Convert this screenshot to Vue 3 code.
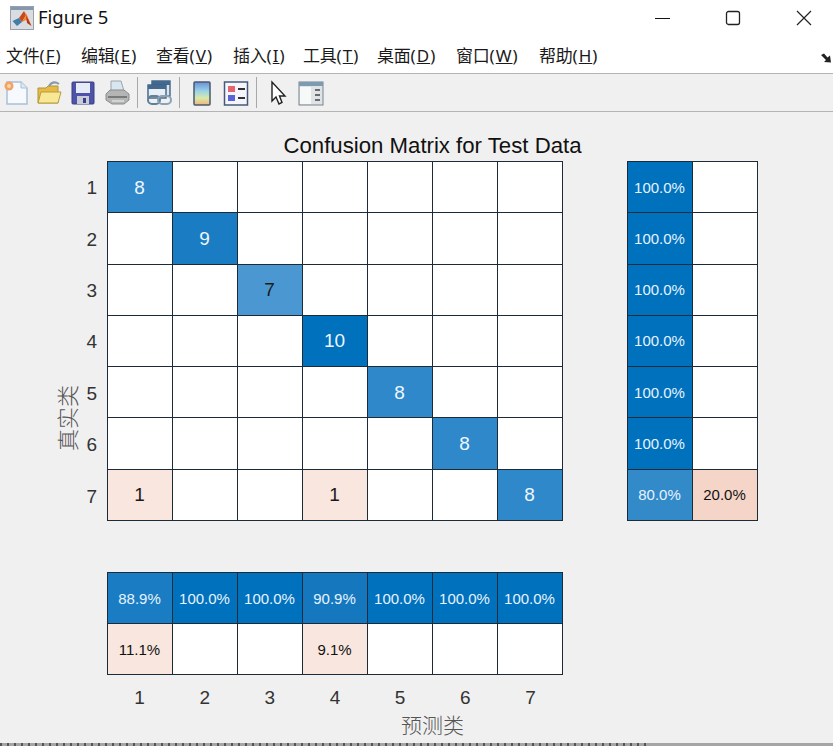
<template>
  <div class="window">
    <header class="titlebar">
      <svg class="app-icon" width="24" height="24" viewBox="0 0 24 24">
        <rect x="0.500" y="0.500" width="23" height="23" fill="#d9dde2" stroke="#98a1ab" />
        <rect x="1" y="1" width="22" height="3" fill="#8397ae" />
        <path d="M2.500 15 L9 12 L12 16 L7 20 Z" fill="#3f7ea8" />
        <path d="M9 12 L14 5 L16 9 L12 16 Z" fill="#c9481f" />
        <path d="M14 5 L17 9 L21.500 20 L16 14 L12 16 L16 9 Z" fill="#ee8a2a" />
        <path d="M16 9 L21.500 20 L17 17 Z" fill="#b5391f" />
      </svg>
      <span class="title">Figure 5</span>
      <div class="win-btns">
        <svg width="16" height="16" viewBox="0 0 16 16"><path d="M1 8.500H16" stroke="#111" stroke-width="1" /></svg>
        <svg width="16" height="16" viewBox="0 0 16 16"><rect x="1.500" y="1.500" width="13" height="13" rx="2" fill="none" stroke="#222" stroke-width="1.300" /></svg>
        <svg width="16" height="16" viewBox="0 0 16 16"><path d="M1 1L15 15M15 1L1 15" stroke="#222" stroke-width="1.200" /></svg>
      </div>
    </header>

    <nav class="menubar">
      <span v-for="m in menus" :key="m.name" class="menu" :style="{ width: m.w + 'px' }">{{ m.name }}<span class="acc">(<u>{{ m.key }}</u>)</span></span>
      <span class="dock">
        <svg width="12" height="12" viewBox="0 0 12 12"><path d="M1 3L4 1.500L7.500 5.500L10 3.500L11 10.500L4 10L6 8L1 3Z" fill="#222" /></svg>
      </span>
    </nav>

    <div class="toolbar">
      <svg class="tool" viewBox="0 0 26 26" width="26" height="26">
        <path d="M4 2H18L24 8V24H4Z" fill="#f6fafe" stroke="#a9c0d8" stroke-width="1.500" />
        <path d="M18 2V8H24" fill="#dce9f5" stroke="#a9c0d8" />
        <circle cx="6" cy="6" r="4.500" fill="#f3a06a" />
        <circle cx="6" cy="6" r="2" fill="#f8d9a0" />
      </svg>
      <svg class="tool" viewBox="0 0 26 26" width="26" height="26">
        <path d="M2 8H10L12 6H22V23H2Z" fill="#e6bb45" stroke="#b4923a" />
        <path d="M2 23L5 12H25L22 23Z" fill="#f8e795" stroke="#b99a40" />
        <path d="M13 6Q17 0 23 4" fill="none" stroke="#8a99a8" stroke-width="2" />
      </svg>
      <svg class="tool n1" viewBox="0 0 26 26" width="26" height="26">
        <rect x="2" y="2" width="22" height="22" rx="1" fill="#4c53a8" stroke="#3a3f85" />
        <rect x="6" y="3" width="14" height="10" fill="#e6ebf8" />
        <rect x="7" y="16" width="12" height="8" fill="#c9cbd6" />
        <rect x="13" y="18" width="3" height="5" fill="#3a3f85" />
      </svg>
      <svg class="tool n1" viewBox="0 0 26 26" width="26" height="26">
        <path d="M7 1H17L20 11H7Z" fill="#d8e6ef" stroke="#9aa5ad" />
        <path d="M2 14L6 10H20L25 14V20L20 24H8L2 20Z" fill="#b4b6b6" stroke="#8a8c8c" />
        <path d="M4 17H23" stroke="#787a7a" stroke-width="2" />
        <path d="M8 21H20" stroke="#dcdcdc" stroke-width="1.500" />
      </svg>
      <i class="sep" />
      <svg class="tool n1" viewBox="0 0 26 26" width="26" height="26">
        <rect x="6" y="1" width="18" height="15" fill="#dbe4ee" stroke="#3e6184" stroke-width="1.400" />
        <rect x="6" y="1" width="18" height="4" fill="#44698e" />
        <rect x="2" y="5" width="18" height="13" fill="#e8eef4" stroke="#3e6184" stroke-width="1.400" />
        <rect x="2" y="5" width="18" height="4" fill="#44698e" />
        <rect x="2" y="16" width="12" height="8" rx="4" fill="none" stroke="#5f8099" stroke-width="2" />
        <rect x="12" y="16" width="13" height="8" rx="4" fill="none" stroke="#8aa2b4" stroke-width="2" />
      </svg>
      <i class="sep" />
      <svg class="tool n2" viewBox="0 0 26 26" width="26" height="26">
        <defs>
          <linearGradient id="cbar" x1="0" y1="0" x2="0" y2="1">
            <stop offset="0" stop-color="#6b8fd8" />
            <stop offset="0.4" stop-color="#9ad4e8" />
            <stop offset="0.7" stop-color="#dbe8a8" />
            <stop offset="1" stop-color="#f0b47a" />
          </linearGradient>
        </defs>
        <rect x="5" y="2" width="16" height="23" rx="1" fill="url(#cbar)" stroke="#47596f" stroke-width="1.500" />
      </svg>
      <svg class="tool n1" viewBox="0 0 26 26" width="26" height="26">
        <rect x="1.500" y="2" width="23" height="23" fill="#f4f6fb" stroke="#47597a" stroke-width="1.500" />
        <rect x="5" y="6" width="7" height="6" fill="#e46470" />
        <rect x="5" y="15" width="7" height="6" fill="#5a64d6" />
        <path d="M15 9H22M15 18H22" stroke="#333" stroke-width="2" />
      </svg>
      <i class="sep" />
      <svg class="tool n2" viewBox="0 0 26 26" width="26" height="26">
        <path d="M6 2V21L10 17L13 24L16 22.500L13.500 16H19Z" fill="#fff" stroke="#222" stroke-width="1.400" />
      </svg>
      <svg class="tool nm" viewBox="0 0 26 26" width="26" height="26">
        <rect x="1" y="2" width="24" height="23" fill="#dfe3e6" stroke="#74848f" />
        <rect x="1" y="2" width="24" height="4" fill="#7d9bb0" />
        <rect x="2" y="7" width="11" height="17" fill="#f7f8f8" />
        <path d="M17 10H22M17 15H22M17 20H22" stroke="#444" stroke-width="1.600" />
      </svg>
    </div>

    <main class="figure">
      <div class="fig-title">Confusion Matrix for Test Data</div>
      <div class="plot">
        <div class="y-side">
          <div class="y-label"><span>真实类</span></div>
          <div class="y-ticks">
            <span v-for="n in 7" :key="n">{{ n }}</span>
          </div>
        </div>
        <div class="grid main-grid">
          <div
            v-for="(c, i) in matrix"
            :key="i"
            class="cell"
            :class="{ light: c.light }"
            :style="{ background: c.bg }"
          >{{ c.text }}</div>
        </div>
        <div class="grid row-summary">
          <div
            v-for="(c, i) in rowSummary"
            :key="i"
            class="cell pct"
            :class="{ light: c.light }"
            :style="{ background: c.bg }"
          >{{ c.text }}</div>
        </div>
      </div>
      <div class="bottom">
        <div class="grid col-summary">
          <div
            v-for="(c, i) in colSummary"
            :key="i"
            class="cell pct"
            :class="{ light: c.light }"
            :style="{ background: c.bg }"
          >{{ c.text }}</div>
        </div>
        <div class="x-ticks">
          <span v-for="n in 7" :key="n">{{ n }}</span>
        </div>
        <div class="x-label">预测类</div>
      </div>
    </main>
    <div class="behind"></div>
  </div>
</template>

<script setup>
const menus = [
  { name: '文件', key: 'F', w: 75 },
  { name: '编辑', key: 'E', w: 75 },
  { name: '查看', key: 'V', w: 77 },
  { name: '插入', key: 'I', w: 70 },
  { name: '工具', key: 'T', w: 74 },
  { name: '桌面', key: 'D', w: 79 },
  { name: '窗口', key: 'W', w: 83 },
  { name: '帮助', key: 'H', w: 70 },
]

const WHITE = '#fff'
const PINK = '#f9e6df'
const BLUE = { 7: '#4b97d1', 8: '#2f88c9', 9: '#1a7cc2', 10: '#0071bc' }

const matrix = []
for (let r = 0; r < 7; r++) {
  for (let c = 0; c < 7; c++) {
    matrix.push({ text: '', bg: WHITE })
  }
}
const diag = [8, 9, 7, 10, 8, 8, 8]
diag.forEach((v, i) => {
  // 7 这一格在原图里是深色字
  matrix[i * 7 + i] = { text: v, bg: BLUE[v], light: v !== 7 }
})
matrix[42] = { text: 1, bg: PINK }
matrix[45] = { text: 1, bg: PINK }

const rowSummary = []
for (let r = 0; r < 6; r++) {
  rowSummary.push({ text: '100.0%', bg: '#0071bc', light: true })
  rowSummary.push({ text: '', bg: WHITE })
}
rowSummary.push({ text: '80.0%', bg: '#338ac9', light: true })
rowSummary.push({ text: '20.0%', bg: '#f6d5c9' })

const top = ['88.9%', '100.0%', '100.0%', '90.9%', '100.0%', '100.0%', '100.0%']
const bot = ['11.1%', '', '', '9.1%', '', '', '']
const colSummary = [
  ...top.map(t => ({
    text: t,
    light: true,
    bg: t === '88.9%' ? '#1a7cc2' : t === '90.9%' ? '#1578bf' : '#0071bc',
  })),
  ...bot.map(t => ({ text: t, bg: t ? PINK : WHITE })),
]
</script>

<style scoped>
.window {
  width: 833px;
  height: 746px;
  overflow: hidden;
  background: #fff;
  display: flex;
  flex-direction: column;
  font-family: "Liberation Sans", Arial, "Noto Sans CJK SC", sans-serif;
  color: #262626;
}
.titlebar {
  height: 36px;
  display: flex;
  align-items: center;
  padding-left: 10px;
  flex: none;
}
.app-icon {
  margin-right: 4px;
}
.title {
  font-family: "Noto Sans", "Open Sans", sans-serif;
  font-size: 18.500px;
  line-height: 24px;
  margin-bottom: 3px;
  color: #111;
}
.win-btns {
  margin-left: auto;
  display: flex;
  gap: 55px;
  padding-right: 21px;
}
.menubar {
  height: 37px;
  display: flex;
  align-items: center;
  padding-left: 6px;
  flex: none;
  font-family: "Noto Sans", "Noto Sans CJK SC", sans-serif;
  font-size: 17px;
  color: #1a1a1a;
}
.menu {
  flex: none;
  white-space: nowrap;
  letter-spacing: -0.200px;
}
.acc {
  letter-spacing: 1px;
}
.dock {
  margin-left: auto;
  padding: 6px 1px 0 0;
  display: flex;
}
.toolbar {
  height: 39px;
  flex: none;
  box-sizing: border-box;
  background: #f0f0f0;
  border-top: 1px solid #b4b4b4;
  border-bottom: 1px solid #b4b4b4;
  display: flex;
  align-items: center;
  padding-left: 3px;
  gap: 7px;
}
.tool.n1 {
  margin-left: 1px;
}
.tool.n2 {
  margin-left: 2px;
}
.tool.nm {
  margin-left: -1px;
}
.sep {
  width: 1px;
  height: 31px;
  background: #a8a8a8;
}
.figure {
  flex: 1;
  min-height: 0;
  background: #f0f0f0;
  padding-left: 107px;
}
.fig-title {
  width: 651px;
  height: 49px;
  box-sizing: border-box;
  padding-top: 21px;
  text-align: center;
  font-size: 22.200px;
  line-height: 26px;
  color: #111;
}
.plot {
  display: flex;
  position: relative;
  gap: 64px;
}
.y-side {
  position: absolute;
  right: 100%;
  top: 0;
  width: 60px;
  height: 100%;
}
.y-ticks {
  height: 100%;
  display: flex;
  flex-direction: column;
  align-items: flex-end;
  padding-right: 10px;
  box-sizing: border-box;
  font-size: 19px;
  color: #333;
}
.y-ticks span {
  flex: 1;
  display: flex;
  align-items: center;
  padding-top: 3px;
}
.y-label {
  position: absolute;
  left: 8px;
  top: 224px;
  color: #555;
  font-size: 22px;
  line-height: 22px;
  font-weight: 300;
  font-family: "Noto Sans CJK SC", sans-serif;
}
.y-label span {
  display: block;
  writing-mode: vertical-rl;
  text-orientation: sideways;
  transform: rotate(180deg);
}
.grid {
  display: grid;
  gap: 1px;
  padding: 1px;
  background: #1d2b38;
  flex: none;
  box-sizing: border-box;
}
.main-grid {
  width: 456px;
  height: 360px;
  grid-template-columns: repeat(7, 1fr);
  grid-template-rows: repeat(7, 1fr);
}
.row-summary {
  width: 131px;
  height: 360px;
  grid-template-columns: repeat(2, 1fr);
  grid-template-rows: repeat(7, 1fr);
}
.col-summary {
  width: 456px;
  height: 103px;
  grid-template-columns: repeat(7, 1fr);
  grid-template-rows: repeat(2, 1fr);
}
.cell {
  display: flex;
  align-items: center;
  justify-content: center;
  font-size: 19px;
  padding: 1px 1px 0 0;
  color: #1a1a1a;
}
.cell.light {
  color: #eef7ff;
}
.cell.pct {
  font-size: 15px;
  padding-top: 0;
  color: #111;
}
.cell.pct.light {
  color: #e6f3ff;
}
.bottom {
  padding-top: 51px;
  width: 651px;
}
.x-ticks {
  display: grid;
  width: 456px;
  grid-template-columns: repeat(7, 1fr);
  text-align: center;
  font-size: 19px;
  margin-top: 12px;
  line-height: 22px;
  color: #333;
}
.x-label {
  text-align: center;
  font-size: 21px;
  line-height: 24px;
  margin-top: 3px;
  color: #555;
  font-weight: 300;
  font-family: "Noto Sans CJK SC", sans-serif;
}
.behind {
  height: 3px;
  flex: none;
  background:
    repeating-linear-gradient(90deg, #555 0 2px, transparent 2px 7px) 0 0 / 650px 100% no-repeat,
    #a5a5a5;
}
</style>

<style>
html, body {
  margin: 0;
  background: #fff;
  overflow: hidden;
}
</style>
